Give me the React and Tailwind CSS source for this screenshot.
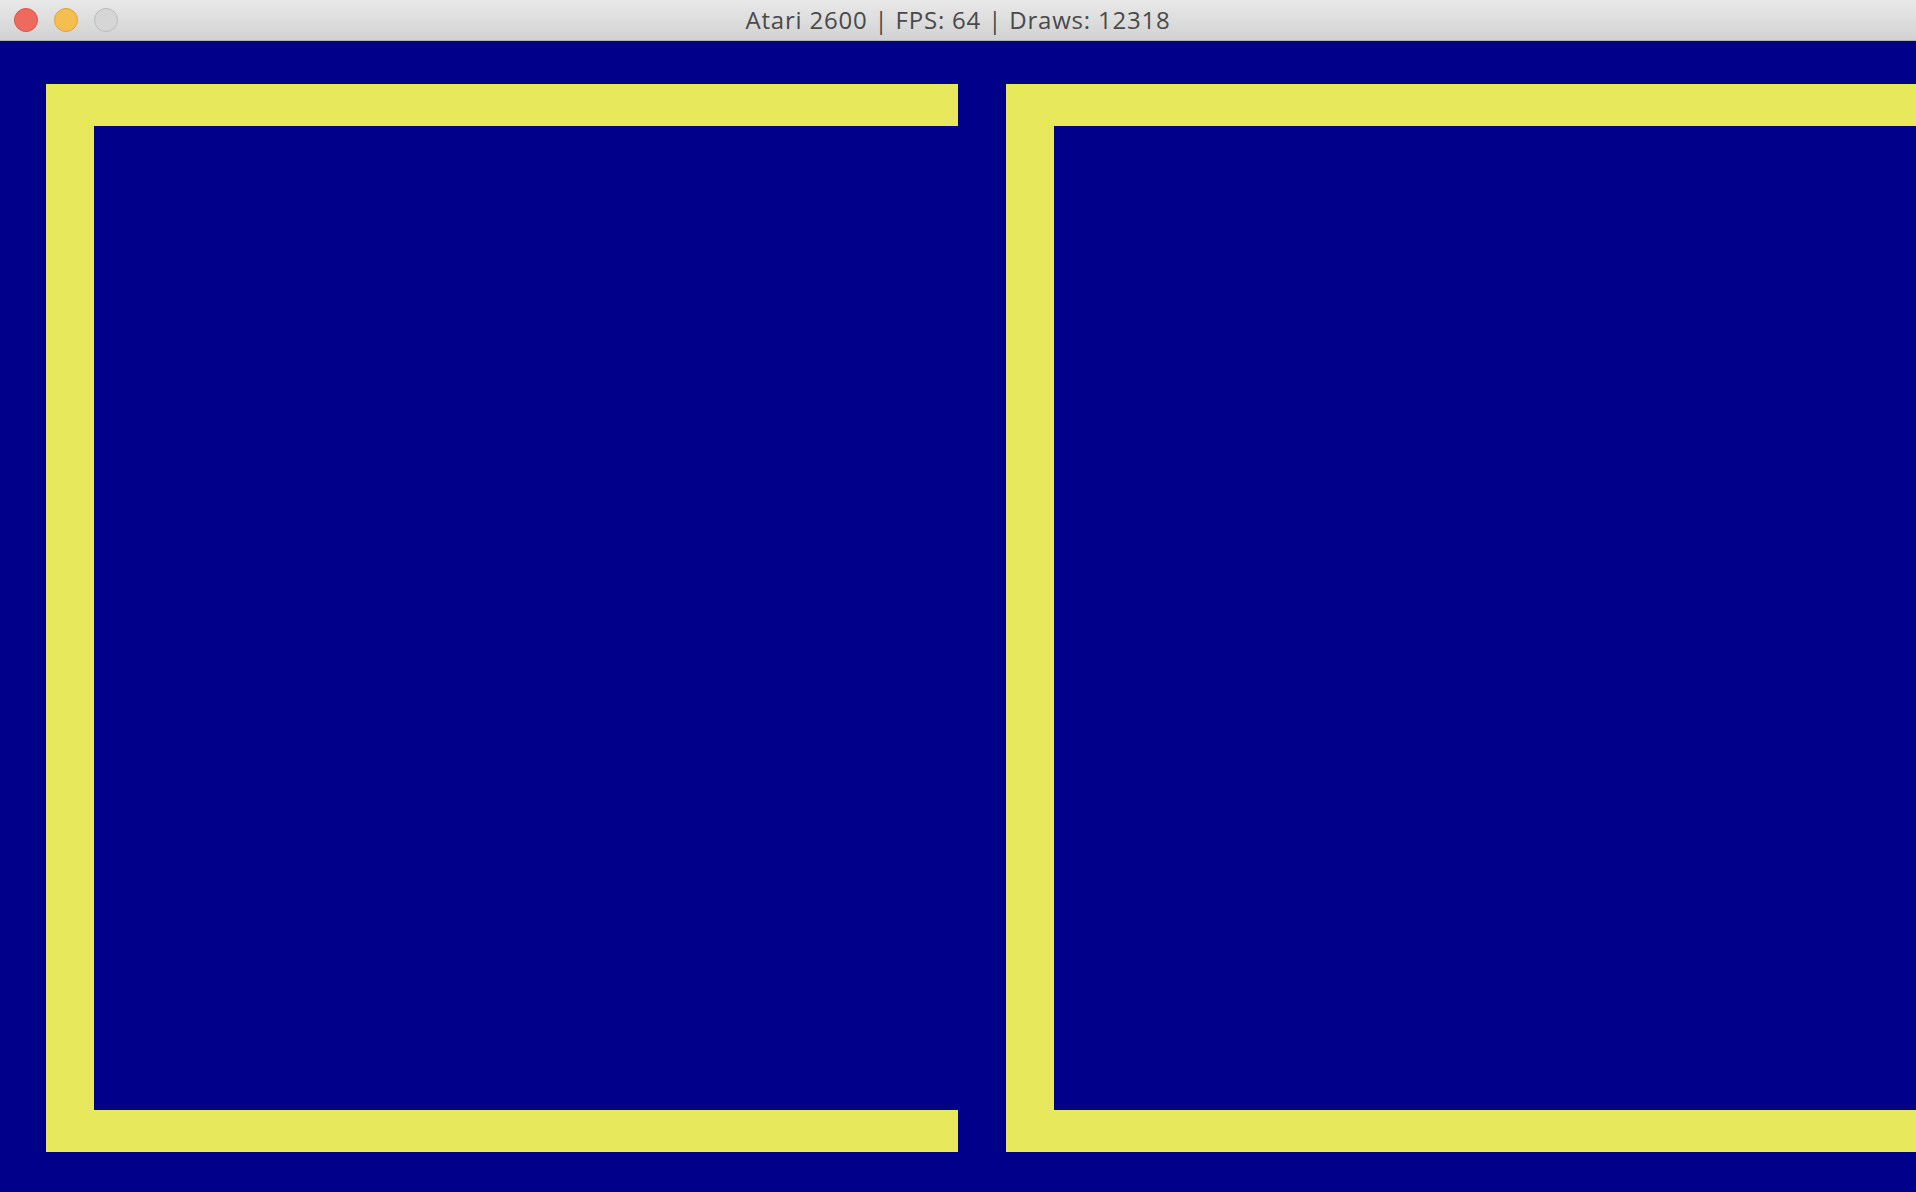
export default function App() {
  return (
    <div className="flex h-[1192px] w-[1916px] flex-col overflow-hidden bg-[#00008b]">
      {/* window title bar */}
      <div className="relative flex h-[41px] shrink-0 items-center justify-center border-b border-[#b4b4b4] bg-gradient-to-b from-[#e9e9e9] to-[#d2d2d2]">
        <div className="absolute left-[14px] top-[8px] flex gap-[16px]">
          <span className="h-[24px] w-[24px] rounded-full border border-[#d9544a] bg-[#ee6a5f]" />
          <span className="h-[24px] w-[24px] rounded-full border border-[#dea23b] bg-[#f5bf4f]" />
          <span className="h-[24px] w-[24px] rounded-full border border-[#bcbcbc] bg-[#d6d6d6]" />
        </div>
        <span className="font-['Open_Sans',Arial,sans-serif] text-[24px] tracking-[0.8px] text-[#4a4a4a]">
          Atari 2600 | FPS: 64 | Draws: 12318
        </span>
      </div>

      {/* playfield */}
      <div className="flex gap-[48px] pl-[46px] pt-[43px]">
        <div className="h-[1068px] w-[912px] shrink-0 border-y-[42px] border-l-[48px] border-[#e8e85c]" />
        <div className="h-[1068px] w-[912px] shrink-0 border-y-[42px] border-l-[48px] border-[#e8e85c]" />
      </div>
    </div>
  )
}
